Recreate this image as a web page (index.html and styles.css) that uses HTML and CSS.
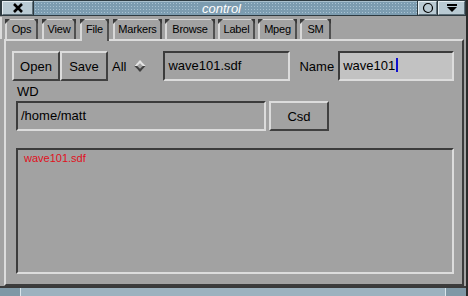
FILE: index.html
```html
<!DOCTYPE html>
<html lang="en">
<head>
    <meta charset="UTF-8">
    <title>control</title>
    <link rel="stylesheet" href="styles.css">
</head>
<body>
    <div class="window">
        <div class="titlebar">
            <div class="tb-btn tb-close">
                <svg width="12" height="10" viewBox="0 0 12 10"><path d="M2 1 L10 9 M10 1 L2 9" stroke="#000" stroke-width="2.6"/></svg>
            </div>
            <div class="tb-title"><span>control</span></div>
            <div class="tb-btn tb-iconify">
                <svg width="12" height="12" viewBox="0 0 12 12"><circle cx="6" cy="6" r="4.5" fill="none" stroke="#000" stroke-width="1.2"/></svg>
            </div>
            <div class="tb-btn tb-menu">
                <svg width="12" height="10" viewBox="0 0 12 10"><rect x="1" y="1" width="10" height="2" fill="#000"/><path d="M1 4 L11 4 L6 9 Z" fill="#000"/></svg>
            </div>
        </div>

        <div class="tabs">
            <div class="tab tab-ops">Ops</div>
            <div class="tab tab-view">View</div>
            <div class="tab tab-file tab-active">File</div>
            <div class="tab tab-markers">Markers</div>
            <div class="tab tab-browse">Browse</div>
            <div class="tab tab-label">Label</div>
            <div class="tab tab-mpeg">Mpeg</div>
            <div class="tab tab-sm">SM</div>
        </div>

        <div class="panel">
            <div class="row row-file">
                <div class="btn btn-open">Open</div>
                <div class="btn btn-save">Save</div>
                <span class="label label-all">All</span>
                <span class="diamond"></span>
                <div class="entry entry-file">wave101.sdf</div>
                <span class="label label-name">Name</span>
                <div class="entry entry-name">wave101<span class="cursor"></span></div>
            </div>
            <div class="label label-wd">WD</div>
            <div class="row row-wd">
                <div class="entry entry-wd">/home/matt</div>
                <div class="btn btn-csd">Csd</div>
            </div>
            <div class="listbox">
                <div class="list-item">wave101.sdf</div>
            </div>
        </div>

        <div class="bottom-strip">
            <div class="strip-left"></div>
            <div class="strip-mid"></div>
            <div class="strip-right"></div>
        </div>
    </div>
</body>
</html>
```

FILE: styles.css
```css
body {
    margin: 0;
    padding: 0;
    background: #a2a2a2;
    font-family: "Liberation Sans", Arial, sans-serif;
    font-size: 13px;
    color: #000;
}

.window {
    width: 468px;
    height: 296px;
    display: flex;
    flex-direction: column;
    background: #a2a2a2;
    box-sizing: border-box;
    border-right: 2px solid #2a2a2a;
}

/* title bar */
.titlebar {
    height: 16px;
    display: flex;
    align-items: stretch;
    background: #2e3a40;
    padding: 1px 1px 1px 2px;
    box-sizing: border-box;
    gap: 1px;
}

.tb-btn {
    display: flex;
    align-items: center;
    justify-content: center;
    background: #b9cad3;
    border-top: 1px solid #e6eef2;
    border-left: 1px solid #e6eef2;
    border-right: 1px solid #5d6e78;
    border-bottom: 1px solid #5d6e78;
    box-sizing: border-box;
}

.tb-close {
    width: 31px;
}

.tb-iconify {
    width: 19px;
}

.tb-menu {
    width: 27px;
}

.tb-title {
    flex: 1;
    display: flex;
    align-items: center;
    justify-content: center;
    background-color: #7c9cb0;
    background-image: radial-gradient(circle, #a9c2d2 0.8px, transparent 1px);
    background-size: 3px 3px;
    border-top: 1px solid #a9c0cd;
}

.tb-title span {
    color: #fff;
    font-style: italic;
    font-size: 13px;
    line-height: 13px;
    background: #7c9cb0;
    padding: 0 3px;
    margin-left: -8px;
}

/* tabs */
.tabs {
    height: 22px;
    display: flex;
    align-items: flex-end;
    gap: 3px;
    padding-left: 3px;
    border-left: 2px solid #dcdcdc;
    margin-top: 1px;
}

.tab {
    position: relative;
    height: 20px;
    line-height: 19px;
    text-align: center;
    font-size: 11px;
    letter-spacing: -0.2px;
    border-top: 1px solid #d8d8d8;
    border-left: 2px solid #d8d8d8;
    border-right: 2px solid #505050;
    box-sizing: border-box;
}

.tab::before {
    content: "";
    position: absolute;
    top: -1px;
    left: -2px;
    width: 0;
    height: 0;
    border-top: 5px solid #3a3a3a;
    border-right: 5px solid transparent;
}

.tab::after {
    content: "";
    position: absolute;
    top: -1px;
    right: -2px;
    width: 0;
    height: 0;
    border-top: 5px solid #3a3a3a;
    border-left: 4px solid transparent;
}

.tab-ops { width: 33px; }
.tab-view { width: 34px; margin-left: 1px; }
.tab-file { width: 29px; margin-left: 1px; }
.tab-markers { width: 49px; margin-left: 1px; }
.tab-browse { width: 50px; }
.tab-label { width: 37px; }
.tab-mpeg { width: 39px; }
.tab-sm { width: 31px; }

.tab-active {
    height: 22px;
    margin-bottom: -2px;
    background: #a2a2a2;
    z-index: 1;
}

/* main panel */
.panel {
    flex: 1;
    margin: 0 2px 0 4px;
    border-top: 2px solid #dcdcdc;
    border-left: 2px solid #dcdcdc;
    border-right: 2px solid #3c3c3c;
    border-bottom: 2px solid #3c3c3c;
    padding: 10px 7px 10px 6px;
    display: flex;
    flex-direction: column;
}

.row {
    display: flex;
    align-items: center;
}

.btn {
    height: 30px;
    display: flex;
    align-items: center;
    justify-content: center;
    box-sizing: border-box;
    border-top: 2px solid #dcdcdc;
    border-left: 2px solid #dcdcdc;
    border-right: 2px solid #404040;
    border-bottom: 2px solid #404040;
}

.btn-open,
.btn-save {
    width: 48px;
}

.btn-csd {
    width: 60px;
    margin-left: 3px;
}

.entry {
    height: 30px;
    line-height: 26px;
    box-sizing: border-box;
    padding-left: 3px;
    border-top: 2px solid #3c3c3c;
    border-left: 2px solid #3c3c3c;
    border-right: 2px solid #dcdcdc;
    border-bottom: 2px solid #dcdcdc;
    white-space: nowrap;
}

.label-all {
    margin-left: 4px;
}

.diamond {
    width: 8px;
    height: 8px;
    margin-left: 10px;
    transform: rotate(45deg);
    border-top: 2px solid #e4e4e4;
    border-left: 2px solid #e4e4e4;
    border-right: 2px solid #404040;
    border-bottom: 2px solid #404040;
    box-sizing: border-box;
}

.entry-file {
    width: 127px;
    margin-left: 19px;
}

.label-name {
    margin-left: 9px;
}

.entry-name {
    width: 116px;
    margin-left: 4px;
    background: #c2c2c2;
}

.cursor {
    display: inline-block;
    width: 2px;
    height: 14px;
    margin-left: 1px;
    vertical-align: -2px;
    background: #1010d0;
}

.label-wd {
    margin: 3px 0 0 5px;
    height: 16px;
    line-height: 16px;
}

.row-wd {
    margin-top: 1px;
    padding-left: 4px;
}

.entry-wd {
    width: 250px;
}

.listbox {
    margin: 17px 0 0 4px;
    width: 438px;
    flex: 1;
    box-sizing: border-box;
    border-top: 2px solid #3c3c3c;
    border-left: 2px solid #3c3c3c;
    border-right: 2px solid #dcdcdc;
    border-bottom: 2px solid #dcdcdc;
    padding: 2px 0 0 6px;
}

.list-item {
    color: #e0101c;
    font-size: 11px;
    line-height: 13px;
}

/* bottom strip */
.bottom-strip {
    height: 8px;
    display: flex;
    border-top: 2px solid #3a3a3a;
    background: #9cb2bf;
}

.strip-left {
    width: 20px;
    background: #7f98a6;
    border-right: 1px solid #d8e4ea;
}

.strip-mid {
    flex: 1;
}

.strip-right {
    width: 20px;
    background: #7f98a6;
    border-left: 1px solid #d8e4ea;
}
```
